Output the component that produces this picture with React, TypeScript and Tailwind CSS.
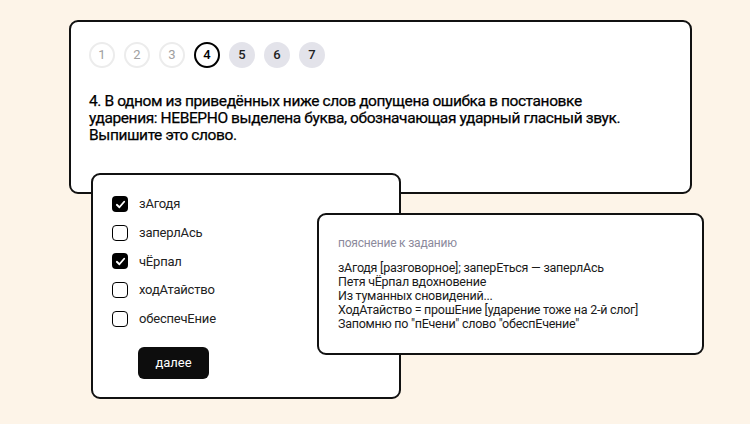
import React from 'react';

const steps = [
  { n: 1, state: 'done' },
  { n: 2, state: 'done' },
  { n: 3, state: 'done' },
  { n: 4, state: 'current' },
  { n: 5, state: 'todo' },
  { n: 6, state: 'todo' },
  { n: 7, state: 'todo' },
];

const options = [
  { label: 'зАгодя', checked: true },
  { label: 'заперлАсь', checked: false },
  { label: 'чЁрпал', checked: true },
  { label: 'ходАтайство', checked: false },
  { label: 'обеспечЕние', checked: false },
];

const notes = [
  'зАгодя [разговорное]; заперЕться — заперлАсь',
  'Петя чЁрпал вдохновение',
  'Из туманных сновидений...',
  'ХодАтайство = прошЕние [ударение тоже на 2-й слог]',
  'Запомню по "пЕчени" слово "обеспЕчение"',
];

const Step: React.FC<{ n: number; state: string }> = ({ n, state }) => {
  if (state === 'current') {
    return (
      <div className="flex h-[26px] w-[26px] items-center justify-center rounded-full border-2 border-black text-[13px] font-medium text-black">
        {n}
      </div>
    );
  }
  if (state === 'done') {
    return (
      <div className="flex h-[26px] w-[26px] items-center justify-center rounded-full border-2 border-[#ececec] text-[13px] text-[#a0a0a0]">
        {n}
      </div>
    );
  }
  return (
    <div className="flex h-[26px] w-[26px] items-center justify-center rounded-full bg-[#e3e3ea] text-[13px] font-medium text-[#222]">
      {n}
    </div>
  );
};

const Checkbox: React.FC<{ checked: boolean }> = ({ checked }) =>
  checked ? (
    <div className="flex h-[16px] w-[16px] items-center justify-center rounded-[4px] bg-black">
      <svg width="11" height="11" viewBox="0 0 12 12" fill="none">
        <path d="M2 6.3 L4.8 9 L10 3" stroke="white" strokeWidth="2" strokeLinecap="round" strokeLinejoin="round" />
      </svg>
    </div>
  ) : (
    <div className="h-[16px] w-[16px] rounded-[4px] border-[1.5px] border-black bg-white" />
  );

export default function App() {
  return (
    <div
      className="h-[424px] w-[750px] overflow-hidden bg-[#fdf4e8] pt-[20px]"
      style={{ fontFamily: 'Roboto, "Noto Sans", sans-serif' }}
    >
      <div className="ml-[69px] h-[174px] w-[623px] rounded-[9px] border-2 border-[#111] bg-white px-[18px] pt-[20px]">
        <div className="flex gap-[9px]">
          {steps.map((s) => (
            <Step key={s.n} {...s} />
          ))}
        </div>
        <p className="mt-[25px] text-[15.5px] leading-[17px] font-normal tracking-[-0.4px] text-black [-webkit-text-stroke:0.25px_black]">
          4. В одном из приведённых ниже слов допущена ошибка в постановке
          <br />
          ударения: НЕВЕРНО выделена буква, обозначающая ударный гласный звук.
          <br />
          Выпишите это слово.
        </p>
      </div>

      <div className="flex items-start">
        <div className="relative z-10 ml-[91px] -mt-[21px] h-[226px] w-[310px] rounded-[9px] border-2 border-[#111] bg-white pl-[19px] pt-[21px]">
          <div className="flex flex-col gap-[12.7px]">
            {options.map((o) => (
              <div key={o.label} className="flex h-[16px] items-center gap-[11px]">
                <Checkbox checked={o.checked} />
                <span className="text-[13px] tracking-[-0.2px] text-[#222]">{o.label}</span>
              </div>
            ))}
          </div>
          <button className="mt-[20px] ml-[26px] flex h-[32px] w-[71px] items-center justify-center rounded-[6px] bg-[#0d0d0d] text-[13px] text-white">
            далее
          </button>
        </div>

        <div className="relative z-20 -ml-[84px] mt-[19px] h-[142px] w-[387px] rounded-[9px] border-2 border-[#111] bg-white pl-[19px] pt-[19px]">
          <div className="text-[12px] tracking-[-0.2px] text-[#8c8a9c]">пояснение к заданию</div>
          <div className="mt-[9px] text-[12.5px] leading-[14px] tracking-[-0.25px] text-[#1a1a1a]">
            {notes.map((t) => (
              <div key={t}>{t}</div>
            ))}
          </div>
        </div>
      </div>
    </div>
  );
}
